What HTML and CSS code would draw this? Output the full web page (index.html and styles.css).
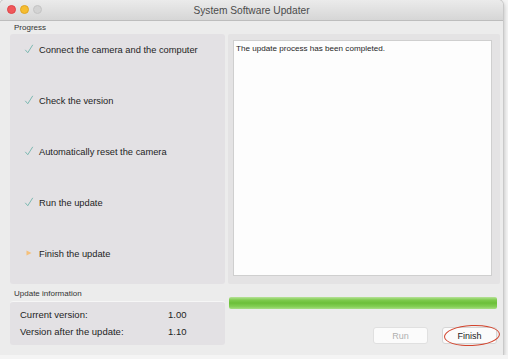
FILE: index.html
```html
<!DOCTYPE html>
<html>
<head>
<meta charset="utf-8">
<link rel="stylesheet" href="styles.css">
</head>
<body>
<div class="window">
  <div class="titlebar">
    <div class="lights">
      <span class="light red"></span>
      <span class="light yellow"></span>
      <span class="light gray"></span>
    </div>
    <div class="title">System Software Updater</div>
  </div>
  <div class="main">
    <div class="left">
      <div class="label">Progress</div>
      <div class="steps">
        <div class="step"><svg class="check" viewBox="0 0 12 12"><path d="M1.5 7 L4.5 10.5 L10.5 1" fill="none" stroke="#7db9b2" stroke-width="1.2"/></svg><span>Connect the camera and the computer</span></div>
        <div class="step"><svg class="check" viewBox="0 0 12 12"><path d="M1.5 7 L4.5 10.5 L10.5 1" fill="none" stroke="#7db9b2" stroke-width="1.2"/></svg><span>Check the version</span></div>
        <div class="step"><svg class="check" viewBox="0 0 12 12"><path d="M1.5 7 L4.5 10.5 L10.5 1" fill="none" stroke="#7db9b2" stroke-width="1.2"/></svg><span>Automatically reset the camera</span></div>
        <div class="step"><svg class="check" viewBox="0 0 12 12"><path d="M1.5 7 L4.5 10.5 L10.5 1" fill="none" stroke="#7db9b2" stroke-width="1.2"/></svg><span>Run the update</span></div>
        <div class="step"><svg class="check" viewBox="0 0 12 12"><path d="M3 3 L9 6 L3 9 Z" fill="#f5c07a"/></svg><span>Finish the update</span></div>
      </div>
      <div class="label info-label">Update information</div>
      <div class="info">
        <div class="info-row"><span class="k">Current version:</span><span class="v">1.00</span></div>
        <div class="info-row"><span class="k">Version after the update:</span><span class="v">1.10</span></div>
      </div>
    </div>
    <div class="right">
      <div class="log-frame">
        <div class="log">The update process has been completed.</div>
      </div>
      <div class="bar"></div>
      <div class="buttons">
        <button class="btn disabled">Run</button>
        <button class="btn finish">Finish</button>
      </div>
    </div>
  </div>
</div>
</body>
</html>
```
FILE: styles.css
```css
html, body {
  margin: 0;
  padding: 0;
  background: #f4f4f4;
  font-family: "Liberation Sans", Arial, sans-serif;
  color: #1e1e1e;
}
.window {
  width: 503px;
  height: 355px;
  background: #ececec;
  border-radius: 5px 5px 0 0;
  box-shadow: 0 0 0 1px #c9c9c9, 1px 2px 4px rgba(0,0,0,0.25);
  overflow: hidden;
  display: flex;
  flex-direction: column;
}
.titlebar {
  height: 20px;
  flex: none;
  background: linear-gradient(#ebebeb, #d6d6d6);
  border-bottom: 1px solid #bdbdbd;
  position: relative;
  display: flex;
  align-items: center;
  justify-content: center;
}
.lights {
  position: absolute;
  left: 7px;
  top: 5px;
  display: flex;
  gap: 4px;
}
.light {
  width: 9px;
  height: 9px;
  border-radius: 50%;
  display: block;
}
.red { background: #f0575a; border: 0.5px solid #de4548; box-sizing: border-box; }
.yellow { background: #f6bd2f; border: 0.5px solid #dfa526; box-sizing: border-box; }
.gray { background: #d3d3d3; border: 0.5px solid #c4c4c4; box-sizing: border-box; }
.title {
  font-size: 10.2px;
  color: #4b4b4b;
}
.main {
  flex: 1;
  display: flex;
  padding: 0 3px 0 10px;
  gap: 3px;
}
.left {
  width: 215px;
  display: flex;
  flex-direction: column;
}
.label {
  font-size: 8px;
  color: #333;
  height: 13px;
  line-height: 13px;
  padding-left: 4px;
}
.steps {
  height: 250px;
  background: #e3e1e4;
  border-radius: 3px;
  display: flex;
  flex-direction: column;
  padding-top: 9px;
  box-sizing: border-box;
}
.step {
  height: 51px;
  display: flex;
  align-items: flex-start;
  font-size: 9.3px;
  padding-left: 14px;
  flex: none;
}
.step span { padding-top: 2px; }
.check {
  width: 10px;
  height: 12px;
  margin-right: 5px;
  flex: none;
}
.info-label {
  margin-top: 3px;
  height: 14px;
  line-height: 14px;
}
.info {
  background: #e3e1e4;
  border-radius: 3px;
  border-top: 1px solid #f6f6f6;
  height: 44px;
  box-sizing: border-box;
  padding: 7px 0 0 10px;
  font-size: 9.5px;
}
.info-row {
  display: flex;
  height: 17px;
}
.k { width: 148px; }
.right {
  flex: 1;
  display: flex;
  flex-direction: column;
  padding-top: 13px;
}
.log-frame {
  height: 250px;
  background: #e4e3e4;
  border-radius: 2px;
  padding: 6px 8px 8px 5px;
  box-sizing: border-box;
}
.log {
  background: #fdfdfd;
  height: 100%;
  border: 1px solid #cfcfcf;
  box-sizing: border-box;
  font-size: 8.1px;
  padding: 3px 2px;
}
.bar {
  margin: 13px 3px 0 1px;
  height: 12px;
  border-radius: 2px;
  background: linear-gradient(#b8e29a 0%, #7fcb4e 25%, #6cbf39 50%, #84cf55 80%, #a8dc86 100%);
}
.buttons {
  display: flex;
  justify-content: flex-end;
  gap: 14px;
  padding: 18px 3px 0 0;
}
.btn {
  width: 55px;
  height: 17px;
  font-family: "Liberation Sans", Arial, sans-serif;
  font-size: 9px;
  background: #fbfbfb;
  border: 1px solid #d6d6d6;
  border-radius: 3px;
  padding: 0;
  color: #222;
  position: relative;
}
.disabled { color: #b0b0b0; border-color: #e0e0e0; }
.finish::after {
  content: "";
  position: absolute;
  left: 1px;
  top: -3px;
  width: 54px;
  height: 19px;
  border: 1.5px solid #d2442d;
  border-radius: 50%;
  transform: rotate(-3deg);
}
```
